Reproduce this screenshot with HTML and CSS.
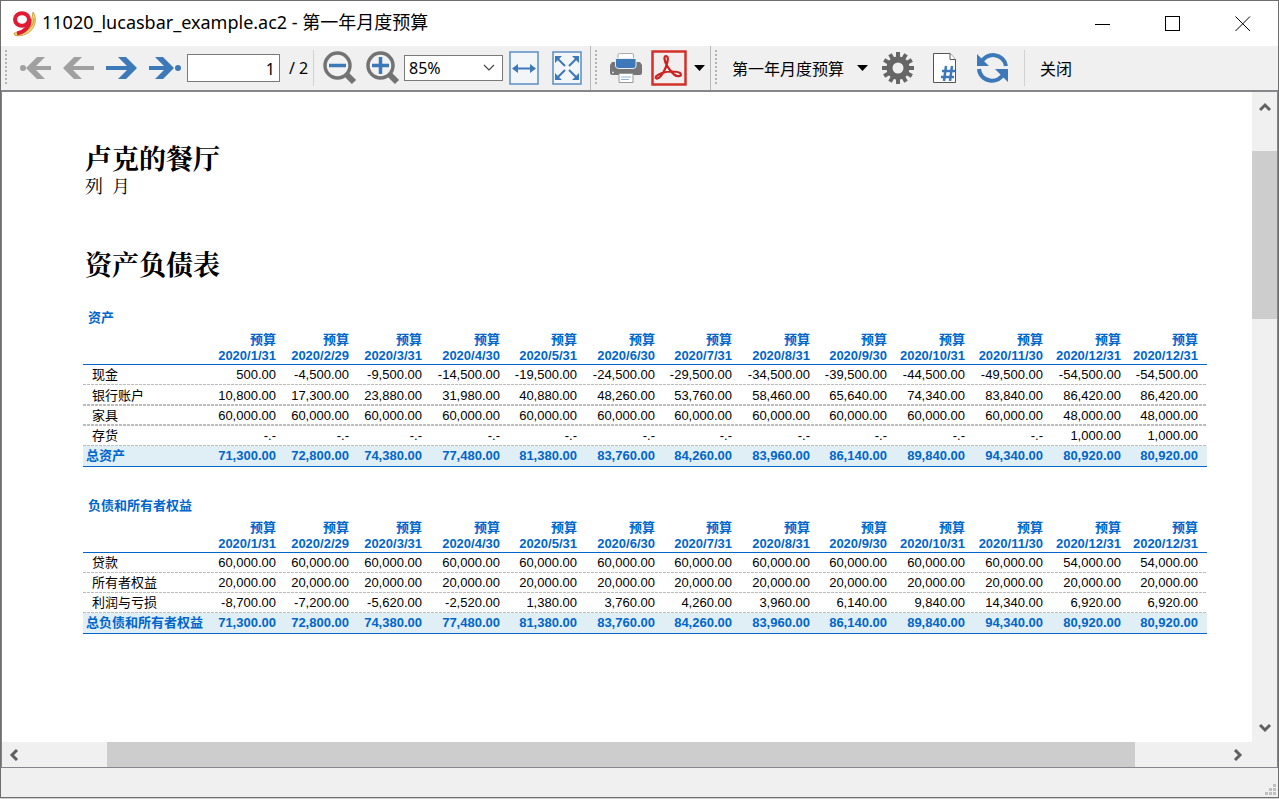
FILE: index.html
```html
<!DOCTYPE html>
<html lang="zh-CN">
<head>
<meta charset="utf-8">
<title>11020_lucasbar_example.ac2 - 第一年月度预算</title>
<link rel="stylesheet" href="styles.css">
</head>
<body>
<div class="window">
  <header class="titlebar">
    <svg class="logo" width="26" height="26" viewBox="0 0 26 26" aria-hidden="true">
      <path d="M22 1C24 3 25.500 10 23 15C20 22 12 26 4 24.500L3 22C11 22 16 18 19 13C21 9 21.500 5 22 1Z" fill="#f0d878" stroke="#cfa548" stroke-width="1"/>
      <path d="M23 7C23 14 18 20 10 23" fill="none" stroke="#c79b34" stroke-width="1"/>
      <ellipse cx="11" cy="8.500" rx="7" ry="6.300" fill="#fff" stroke="#df1b35" stroke-width="4"/>
      <path d="M18.200 8C19.500 15 14 21 6 22.500" fill="none" stroke="#df1b35" stroke-width="4"/>
    </svg>
    <h1 class="title">11020_lucasbar_example.ac2 - 第一年月度预算</h1>
    <div class="win-buttons">
      <button class="win-btn" aria-label="最小化"><svg width="16" height="16"><path d="M0 8.500H15" stroke="#000"/></svg></button>
      <button class="win-btn" aria-label="最大化"><svg width="16" height="16"><rect x=".5" y=".5" width="14" height="14" fill="none" stroke="#000"/></svg></button>
      <button class="win-btn" aria-label="关闭窗口"><svg width="16" height="16"><path d="M.5 .5L15 15M15 .5L.5 15" stroke="#000"/></svg></button>
    </div>
  </header>

  <nav class="toolbar" aria-label="工具栏">
    <div class="group pages">
      <i class="grip"></i>
      <div class="arrows">
        <button class="icon off" aria-label="第一页"><svg width="32" height="24" viewBox="0 0 32 24"><circle cx="3" cy="12" r="3"/><path d="M6 12L17 1H25L16 10H31V14H16L25 23H17Z"/></svg></button>
        <button class="icon off" aria-label="上一页"><svg width="32" height="24" viewBox="0 0 32 24"><path d="M0 12L11 1H19L10 10H31V14H10L19 23H11Z"/></svg></button>
        <button class="icon" aria-label="下一页"><svg width="32" height="24" viewBox="0 0 32 24"><path d="M31 12L20 1H12L21 10H0V14H21L12 23H20Z"/></svg></button>
        <button class="icon" aria-label="最后一页"><svg width="32" height="24" viewBox="0 0 32 24"><circle cx="29" cy="12" r="3"/><path d="M25 12L14 1H6L15 10H0V14H15L6 23H14Z"/></svg></button>
      </div>
      <input class="page" type="text" value="1" aria-label="页码">
      <span class="total-pages">/ 2</span>
      <i class="sep"></i>
      <div class="zoom">
        <button class="icon" aria-label="缩小"><svg width="34" height="34" viewBox="0 0 34 34"><path d="M23 23L31 31" stroke="#737373" stroke-width="6"/><circle cx="14.500" cy="14.500" r="12.500" fill="#f2f2f2" stroke="#737373" stroke-width="3.500"/><path d="M6 14.500H23" stroke="#3d78b8" stroke-width="3.500"/></svg></button>
        <button class="icon" aria-label="放大"><svg width="34" height="34" viewBox="0 0 34 34"><path d="M23 23L31 31" stroke="#737373" stroke-width="6"/><circle cx="14.500" cy="14.500" r="12.500" fill="#f2f2f2" stroke="#737373" stroke-width="3.500"/><path d="M6 14.500H23M14.500 6V23" stroke="#3d78b8" stroke-width="3.500"/></svg></button>
      </div>
      <select class="scale" aria-label="缩放比例"><option>85%</option></select>
      <div class="fits">
        <button class="icon" aria-label="适合宽度"><svg width="30" height="34" viewBox="0 0 30 34"><rect x="1" y="1" width="28" height="32" fill="#f3f6f9" stroke="#5b8dc4" stroke-width="1.500"/><path d="M8 17.500H22" stroke="#3d78b8" stroke-width="2"/><path d="M3 17.500L9 13V22ZM27 17.500L21 13V22Z"/></svg></button>
        <button class="icon" aria-label="适合页面"><svg width="30" height="34" viewBox="0 0 30 34"><rect x="1" y="1" width="28" height="32" fill="#f3f6f9" stroke="#5b8dc4" stroke-width="1.500"/><path d="M6 8L13 15M24 8L17 15M6 26L13 19M24 26L17 19" stroke="#3d78b8" stroke-width="2"/><path d="M3 5H10L3 12ZM27 5H20L27 12ZM3 29H10L3 22ZM27 29H20L27 22Z"/></svg></button>
      </div>
    </div>
    <div class="group output">
      <i class="grip"></i>
      <button class="icon" aria-label="打印"><svg width="32" height="30" viewBox="0 0 32 30"><path d="M2 9H30L32 12V20Q32 22 30 22H2Q0 22 0 20V12Z" fill="#767676"/><path d="M8 6V2Q8 .5 9.500 .5H22Q23.500 .5 23.500 2V6" fill="#fff" stroke="#aaa"/><path d="M5.500 5.500H26V13Q26 15.500 23 15.500H9Q5.500 15.500 5.500 13Z" fill="#3d78b8" stroke="#e8edf3"/><path d="M9 20.500H23V29.500H9Z" fill="#fff" stroke="#999"/><path d="M11 24H21M11 26.500H19" stroke="#8fb1d8"/><circle cx="3" cy="19.500" r="1" fill="#ddd"/></svg></button>
      <button class="icon" aria-label="导出 PDF"><svg width="36" height="36" viewBox="0 0 36 36"><rect x="1.500" y="1.500" width="33" height="33" fill="#f3eeee" stroke="#d2302b" stroke-width="2.500"/><path d="M15 6C18 6 17 12 14.500 18C12 24 8 29 5.500 28.500C3.500 28 5 25 11 23C17 21 26 21 29 23C32 26 27 27.500 23 24.500C18 20 14 13 13.500 9C13.300 7 14 6 15 6Z" fill="none" stroke="#cc2222" stroke-width="2.200"/></svg></button>
      <button class="icon drop" aria-label="导出选项"><svg width="11" height="6" viewBox="0 0 11 6"><path d="M0 0H11L5.500 6Z" fill="#000"/></svg></button>
    </div>
    <div class="group report">
      <i class="grip"></i>
      <button class="menu">第一年月度预算<svg width="11" height="6" viewBox="0 0 11 6"><path d="M0 0H11L5.500 6Z" fill="#000"/></svg></button>
      <button class="icon" aria-label="设置"><svg width="32" height="32" viewBox="-16 -16 32 32"><g stroke="#666" stroke-width="4"><path d="M0 -16V16M-16 0H16M-8 -13.860L8 13.860M8 -13.860L-8 13.860M-13.860 -8L13.860 8M13.860 -8L-13.860 8"/></g><circle r="8.500" fill="#f0f0f0" stroke="#666" stroke-width="6"/></svg></button>
      <button class="icon" aria-label="页眉页脚"><svg width="24" height="31" viewBox="0 0 24 31"><path d="M.5 .5H17L22.500 6.500V29.500H.5Z" fill="#fff" stroke="#555"/><path d="M17 .5V6.500H22.500" fill="#fff" stroke="#555"/><path d="M13 13L11 28M19 13L17 28M9 18H22M8 24H21" stroke="#3d78b8" stroke-width="2.500"/></svg></button>
      <button class="icon" aria-label="刷新"><svg width="34" height="30" viewBox="0 0 34 30"><g fill="none" stroke="#3d78b8" stroke-width="4"><path d="M5 10A13 12.500 0 0 1 30 13"/><path d="M28 20A13 12.500 0 0 1 3 16"/></g><path d="M1 1V13H13ZM32 29V16H19Z"/></svg></button>
      <i class="sep"></i>
      <button class="menu close">关闭</button>
    </div>
  </nav>

  <main class="viewer">
    <article class="paper">
      <h2 class="heading">卢克的餐厅</h2>
      <p class="subtitle">列&ensp;月</p>
      <h2 class="heading section">资产负债表</h2>

      <table class="sheet">
        <caption>资产</caption>
        <colgroup><col class="label"><col class="wide"><col class="slim" span="2"><col class="wide"><col class="mid"><col class="wide"><col class="mid"><col class="wide"><col class="mid"><col class="wide" span="2"><col class="wide"><col class="mid"></colgroup>
        <thead><tr><td></td><th>预算<br>2020/1/31</th><th>预算<br>2020/2/29</th><th>预算<br>2020/3/31</th><th>预算<br>2020/4/30</th><th>预算<br>2020/5/31</th><th>预算<br>2020/6/30</th><th>预算<br>2020/7/31</th><th>预算<br>2020/8/31</th><th>预算<br>2020/9/30</th><th>预算<br>2020/10/31</th><th>预算<br>2020/11/30</th><th>预算<br>2020/12/31</th><th>预算<br>2020/12/31</th></tr></thead>
        <tbody>
          <tr><th>现金</th><td>500.00</td><td>-4,500.00</td><td>-9,500.00</td><td>-14,500.00</td><td>-19,500.00</td><td>-24,500.00</td><td>-29,500.00</td><td>-34,500.00</td><td>-39,500.00</td><td>-44,500.00</td><td>-49,500.00</td><td>-54,500.00</td><td>-54,500.00</td></tr>
          <tr class="thick tall"><th>银行账户</th><td>10,800.00</td><td>17,300.00</td><td>23,880.00</td><td>31,980.00</td><td>40,880.00</td><td>48,260.00</td><td>53,760.00</td><td>58,460.00</td><td>65,640.00</td><td>74,340.00</td><td>83,840.00</td><td>86,420.00</td><td>86,420.00</td></tr>
          <tr class="thick"><th>家具</th><td>60,000.00</td><td>60,000.00</td><td>60,000.00</td><td>60,000.00</td><td>60,000.00</td><td>60,000.00</td><td>60,000.00</td><td>60,000.00</td><td>60,000.00</td><td>60,000.00</td><td>60,000.00</td><td>48,000.00</td><td>48,000.00</td></tr>
          <tr><th>存货</th><td>-.-</td><td>-.-</td><td>-.-</td><td>-.-</td><td>-.-</td><td>-.-</td><td>-.-</td><td>-.-</td><td>-.-</td><td>-.-</td><td>-.-</td><td>1,000.00</td><td>1,000.00</td></tr>
        </tbody>
        <tfoot><tr><th>总资产</th><td>71,300.00</td><td>72,800.00</td><td>74,380.00</td><td>77,480.00</td><td>81,380.00</td><td>83,760.00</td><td>84,260.00</td><td>83,960.00</td><td>86,140.00</td><td>89,840.00</td><td>94,340.00</td><td>80,920.00</td><td>80,920.00</td></tr></tfoot>
      </table>

      <table class="sheet">
        <caption>负债和所有者权益</caption>
        <colgroup><col class="label"><col class="wide"><col class="slim" span="2"><col class="wide"><col class="mid"><col class="wide"><col class="mid"><col class="wide"><col class="mid"><col class="wide" span="2"><col class="wide"><col class="mid"></colgroup>
        <thead><tr><td></td><th>预算<br>2020/1/31</th><th>预算<br>2020/2/29</th><th>预算<br>2020/3/31</th><th>预算<br>2020/4/30</th><th>预算<br>2020/5/31</th><th>预算<br>2020/6/30</th><th>预算<br>2020/7/31</th><th>预算<br>2020/8/31</th><th>预算<br>2020/9/30</th><th>预算<br>2020/10/31</th><th>预算<br>2020/11/30</th><th>预算<br>2020/12/31</th><th>预算<br>2020/12/31</th></tr></thead>
        <tbody>
          <tr><th>贷款</th><td>60,000.00</td><td>60,000.00</td><td>60,000.00</td><td>60,000.00</td><td>60,000.00</td><td>60,000.00</td><td>60,000.00</td><td>60,000.00</td><td>60,000.00</td><td>60,000.00</td><td>60,000.00</td><td>54,000.00</td><td>54,000.00</td></tr>
          <tr><th>所有者权益</th><td>20,000.00</td><td>20,000.00</td><td>20,000.00</td><td>20,000.00</td><td>20,000.00</td><td>20,000.00</td><td>20,000.00</td><td>20,000.00</td><td>20,000.00</td><td>20,000.00</td><td>20,000.00</td><td>20,000.00</td><td>20,000.00</td></tr>
          <tr><th>利润与亏损</th><td>-8,700.00</td><td>-7,200.00</td><td>-5,620.00</td><td>-2,520.00</td><td>1,380.00</td><td>3,760.00</td><td>4,260.00</td><td>3,960.00</td><td>6,140.00</td><td>9,840.00</td><td>14,340.00</td><td>6,920.00</td><td>6,920.00</td></tr>
        </tbody>
        <tfoot><tr><th>总负债和所有者权益</th><td>71,300.00</td><td>72,800.00</td><td>74,380.00</td><td>77,480.00</td><td>81,380.00</td><td>83,760.00</td><td>84,260.00</td><td>83,960.00</td><td>86,140.00</td><td>89,840.00</td><td>94,340.00</td><td>80,920.00</td><td>80,920.00</td></tr></tfoot>
      </table>
    </article>
    <div class="vbar">
      <button class="bar-btn" aria-label="向上滚动"><svg width="12" height="12" viewBox="0 0 12 12"><path d="M1 9L6 4L11 9"/></svg></button>
      <div class="vtrack"><div class="before"></div><div class="thumb"></div><div class="after"></div></div>
      <button class="bar-btn" aria-label="向下滚动"><svg width="12" height="12" viewBox="0 0 12 12"><path d="M1 3L6 8L11 3"/></svg></button>
    </div>
    <div class="hbar">
      <button class="bar-btn" aria-label="向左滚动"><svg width="12" height="12" viewBox="0 0 12 12"><path d="M8 1L3 6L8 11"/></svg></button>
      <div class="htrack"><div class="before"></div><div class="thumb"></div><div class="after"></div></div>
      <button class="bar-btn right" aria-label="向右滚动"><svg width="12" height="12" viewBox="0 0 12 12"><path d="M4 1L9 6L4 11"/></svg></button>
    </div>
    <div class="corner"></div>
  </main>

  <footer class="status">
    <svg width="11" height="11" viewBox="0 0 11 11" fill="#bfbfbf" aria-hidden="true"><path d="M8 0h3v3H8zM4 4h3v3H4zM8 4h3v3H8zM0 8h3v3H0zM4 8h3v3H4zM8 8h3v3H8z"/></svg>
  </footer>
</div>
</body>
</html>
```
FILE: styles.css
```css
* { box-sizing: border-box; }

body {
  margin: 0;
  background: #d0d0d0;
  color: #000;
  font-family: "Noto Sans", "Noto Sans CJK SC", sans-serif;
  font-size: 16px;
}

.window {
  display: flex;
  flex-direction: column;
  height: calc(100vh - 1px);
  border: 1px solid #6e6e70;
  background: #fff;
}

button {
  padding: 0;
  border: 0;
  background: none;
  color: inherit;
  font: inherit;
}

svg { display: block; }

/* Title bar */
.titlebar {
  display: flex;
  align-items: center;
  height: 45px;
  padding-left: 10px;
}
.title {
  flex: 1;
  margin: 0 0 4px 5px;
  font-size: 18px;
  font-weight: 400;
  line-height: 24px;
  white-space: nowrap;
}
.win-buttons { display: flex; }
.win-btn {
  display: flex;
  justify-content: center;
  width: 70px;
}

/* Toolbar */
.toolbar {
  display: flex;
  height: 46px;
  background: #f0f0f0;
  border-bottom: 2px solid #85858a;
}
.group {
  display: flex;
  align-items: center;
  padding-left: 4px;
  white-space: nowrap;
}
.group + .group { border-left: 1px solid #b8b8b8; }
.pages { width: 589px; }
.output { width: 120px; }
.report { flex: 1; }
.grip {
  width: 2px;
  height: 36px;
  background: repeating-linear-gradient(#b4b4b4 0 2px, transparent 2px 4px);
}
.sep {
  width: 1px;
  height: 36px;
  background: #d2d2d2;
}
.icon { fill: #3d78b8; }
.off { fill: #a0a0a0; }
.arrows {
  display: flex;
  gap: 11px;
  margin: 0 6px 0 13px;
}
.page {
  width: 93px;
  height: 28px;
  padding: 2px 4px 0;
  border: 1px solid #7a7a7a;
  background: #fff;
  font: inherit;
  text-align: right;
}
.total-pages {
  width: 24px;
  margin-left: 9px;
}
.zoom {
  display: flex;
  gap: 9px;
  margin: 0 4px 0 9px;
}
.scale {
  width: 99px;
  height: 26px;
  padding: 0 4px;
  border: 1px solid #7a7a7a;
  border-radius: 0;
  appearance: none;
  background: #fff url("data:image/svg+xml,%3Csvg xmlns='http://www.w3.org/2000/svg' width='12' height='8'%3E%3Cpath d='M1 1L6 6L11 1' fill='none' stroke='%23444' stroke-width='1.2'/%3E%3C/svg%3E") no-repeat right 7px center;
  color: #000;
  font: inherit;
}
.fits {
  display: flex;
  gap: 13px;
  margin-left: 6px;
}
.output .icon { margin-left: 13px; }
.output .icon + .icon { margin-left: 9px; }
.output .drop.icon { margin-left: 7px; }
.menu {
  display: flex;
  align-items: center;
  gap: 13px;
  margin: 0 14px 0 15px;
}
.report .icon { margin-right: 19px; }
.report .sep { margin-left: -5px; }

/* Document viewer */
.viewer {
  display: grid;
  grid-template: minmax(0, 1fr) 25px / minmax(0, 1fr) 25px;
  flex: 1;
  min-height: 0;
  border: 1px solid #85858a;
  border-top: 0;
}
.paper {
  overflow: hidden;
  padding: 49px 45px 0 81px;
}
.heading {
  margin: 0 0 0 2px;
  font: 700 27px/34px "Noto Serif CJK SC", "Noto Sans CJK SC", serif;
}
.subtitle {
  margin: 0 0 0 2px;
  font: 400 18px/20px "Noto Serif CJK SC", "Noto Sans CJK SC", serif;
}
.section { margin-top: 52px; }

.sheet {
  width: 100%;
  margin-top: 29px;
  border-collapse: separate;
  border-spacing: 0;
  table-layout: fixed;
  font: 13px/16px "Liberation Sans", "Noto Sans CJK SC", sans-serif;
}
.sheet caption {
  height: 21px;
  padding-left: 5px;
  color: #06c;
  font-weight: 700;
  text-align: left;
}
.sheet + .sheet { margin-top: 31px; }
.label { width: 124px; }
.wide { width: 78px; }
.mid { width: 77px; }
.slim { width: 73px; }

.sheet th, .sheet td {
  padding: 0 9px 0 0;
  text-align: right;
  white-space: nowrap;
}
.sheet thead tr {
  height: 34px;
  color: #06c;
}
.sheet thead th,
.sheet thead td,
.sheet tfoot th,
.sheet tfoot td { border-bottom: 1px solid #06c; }
.sheet tbody tr {
  height: 20px;
  background: repeating-linear-gradient(90deg, #bcbcbc 0 3px, transparent 3px 4px) no-repeat bottom / 100% 1px;
}
.sheet tbody .thick { background-size: 100% 2px; }
.sheet tbody .tall { height: 21px; }
.sheet tbody th {
  padding-left: 9px;
  font-weight: 400;
  text-align: left;
}
.sheet tfoot tr {
  height: 21px;
  background: #e0eef6;
  color: #06c;
  font-weight: 700;
}
.sheet tfoot th {
  padding: 0 0 0 3px;
  text-align: left;
}

/* Scroll bars */
.vbar, .hbar {
  display: flex;
  background: #f0f0f0;
}
.vbar { flex-direction: column; }
.corner { background: #f0f0f0; }
.bar-btn {
  display: flex;
  align-items: center;
  justify-content: center;
  width: 25px;
  height: 25px;
  fill: none;
  stroke: #606060;
  stroke-width: 3;
}
.vbar .bar-btn { height: 29px; }
.hbar .right { width: 31px; }
.vtrack, .htrack {
  display: flex;
  flex: 1;
}
.vtrack { flex-direction: column; }
.thumb { background: #cdcdcd; }
.vtrack .before { flex: 30; }
.vtrack .thumb { flex: 168; }
.vtrack .after { flex: 394; }
.htrack .before { flex: 80; }
.htrack .thumb { flex: 1028; }
.htrack .after { flex: 86; }

/* Status bar */
.status {
  display: flex;
  align-items: flex-end;
  justify-content: flex-end;
  height: 29px;
  padding: 2px;
  background: #f0f0f0;
}
```
